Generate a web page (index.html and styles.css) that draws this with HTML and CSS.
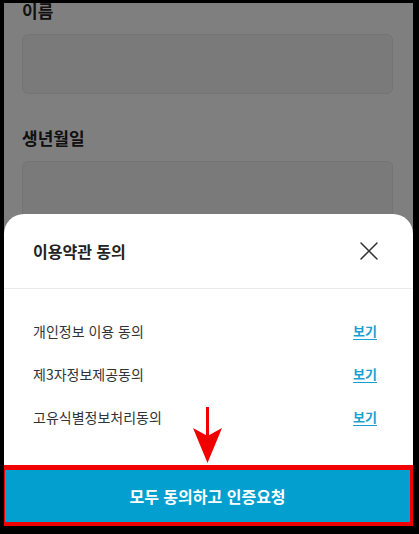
FILE: index.html
```html
<!DOCTYPE html>
<html lang="ko">
<head>
<meta charset="utf-8">
<title>이용약관 동의</title>
<link rel="stylesheet" href="styles.css">
</head>
<body>
<div class="screen">
  <div class="page">
    <div class="field">
      <div class="label">이름</div>
      <div class="input"></div>
    </div>
    <div class="field">
      <div class="label">생년월일</div>
      <div class="input"></div>
    </div>
  </div>
  <div class="dim"></div>
  <div class="sheet">
    <div class="sheet-head">
      <div class="sheet-title">이용약관 동의</div>
      <svg class="close" width="18" height="18" viewBox="0 0 18 18" aria-hidden="true">
        <path d="M1 1 L17 17 M17 1 L1 17" stroke="#333" stroke-width="1.5" fill="none" stroke-linecap="round"/>
      </svg>
    </div>
    <ul class="terms">
      <li class="term"><span>개인정보 이용 동의</span><a class="view">보기</a></li>
      <li class="term"><span>제3자정보제공동의</span><a class="view">보기</a></li>
      <li class="term"><span>고유식별정보처리동의</span><a class="view">보기</a></li>
    </ul>
    <div class="cta-box">
      <div class="cta">모두 동의하고 인증요청</div>
    </div>
  </div>
  <svg class="arrow" width="36" height="62" viewBox="0 0 36 62" aria-hidden="true">
    <rect x="16" y="2" width="3" height="30" fill="#f20000"/>
    <polygon points="3,23 17.5,31 32,23 17.5,58" fill="#f20000"/>
  </svg>
</div>
</body>
</html>
```
FILE: styles.css
```css
* { box-sizing: border-box; }
html, body { margin: 0; padding: 0; }
body {
  background: #000;
  width: 419px;
  height: 534px;
  overflow: hidden;
  font-family: "Noto Sans CJK KR", "Noto Sans", sans-serif;
}
.screen {
  position: relative;
  margin: 3px 6px 0 4px;
  height: 523px;
  background: #fff;
  overflow: hidden;
}
.page {
  padding: 0 20px 0 18px;
  margin-top: -2px;
  display: flex;
  flex-direction: column;
  gap: 34px;
}
.label {
  font-size: 17px;
  line-height: 20px;
  font-weight: 700;
  color: #222;
  margin-bottom: 13px;
}
.input {
  height: 60px;
  background: #f4f4f4;
  border: 1px solid #e8e8e8;
  border-radius: 6px;
}
.dim {
  position: absolute;
  inset: 0;
  background: rgba(0, 0, 0, 0.5);
}
.sheet {
  position: absolute;
  left: 0;
  right: 0;
  bottom: 0;
  height: 312px;
  background: #fff;
  border-radius: 20px 20px 0 0;
  display: flex;
  flex-direction: column;
}
.sheet-head {
  height: 75px;
  flex: none;
  display: flex;
  align-items: center;
  justify-content: space-between;
  padding: 0 35px 0 29px;
  border-bottom: 1px solid #e9e9e9;
}
.sheet-title {
  font-size: 16px;
  font-weight: 700;
  color: #222;
  line-height: 20px;
}
.close { display: block; }
.terms {
  list-style: none;
  margin: 0;
  padding: 20px 36px 0 29px;
  flex: 1;
}
.term {
  height: 43px;
  display: flex;
  align-items: center;
  justify-content: space-between;
  font-size: 14px;
  color: #333;
  line-height: 20px;
}
.view {
  font-size: 13px;
  font-weight: 700;
  color: #1b9fd2;
  text-decoration: underline;
  text-underline-offset: 3px;
}
.cta-box {
  flex: none;
  border-style: solid;
  border-color: #f00000;
  border-width: 5px 3px 4px 1px;
}
.cta {
  height: 52px;
  background: #03a0cf;
  color: #fff;
  font-size: 16px;
  font-weight: 700;
  display: flex;
  align-items: center;
  justify-content: center;
}
.arrow {
  position: absolute;
  left: 186px;
  top: 402px;
}
```
